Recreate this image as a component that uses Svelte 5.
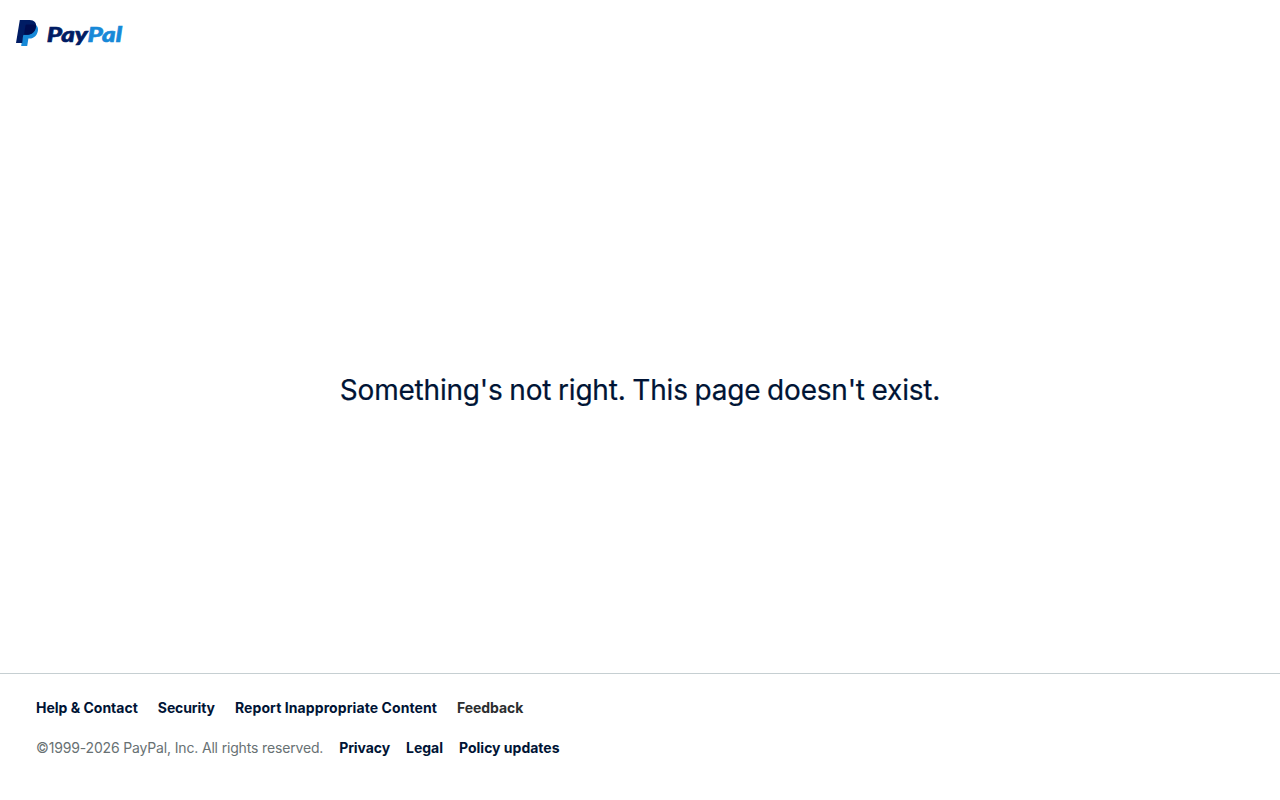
<script>
  const links = [
    { label: "Help & Contact", href: "#help" },
    { label: "Security", href: "#security", tight: true },
    { label: "Report Inappropriate Content", href: "#report", wide: true },
  ];
  const legal = ["Privacy", "Legal", "Policy updates"];
</script>

<div class="page">
  <header>
    <a class="logo" href="#home" aria-label="PayPal">
      <svg width="110" height="30" viewBox="0 0 110 30">
        <path fill="#1789d8" d="M8 6H17C21 6.500 22.700 9.500 21.800 13.300C20.900 17.500 18 20.600 13.500 20.600H12.400L11.200 28H5.200Z" />
        <path fill="#001c64" d="M3.800 2H13.600C18.300 2 20.800 4.900 20 9C19.100 14.200 15.800 16.800 11.200 16.800H8.300Q7.300 16.800 7.100 17.800L6.200 25H0Z" />
        <path fill="#000d50" d="M9.400 7.800Q9.600 6.400 10.900 6.400H16.200Q18.600 6.400 20 7.600C19.600 13.500 16.100 16.800 11.200 16.800H8.100Z" />
        <text class="word" x="30.800" y="23.700" textLength="75.200" lengthAdjust="spacingAndGlyphs"><tspan class="pay">Pay</tspan><tspan class="pal">Pal</tspan></text>
      </svg>
    </a>
  </header>

  <main>
    <h1>Something's not right. This page doesn't exist.</h1>
  </main>

  <footer>
    <nav class="links">
      {#each links as link}
        <a href={link.href} class:wide={link.wide} class:tight={link.tight}>{link.label}</a>
      {/each}
      <button type="button">Feedback</button>
    </nav>
    <div class="legal">
      <span class="copyright">©1999-2026 PayPal, Inc. All rights reserved.</span>
      {#each legal as label}
        <a href="#legal" class:tight={label === "Privacy"}>{label}</a>
      {/each}
    </div>
  </footer>
</div>

<style>
  :global(body) {
    margin: 0;
    background: #fff;
  }

  .page {
    display: flex;
    flex-direction: column;
    height: 100vh;
    color: #001435;
    font-family: Inter, "Liberation Sans", sans-serif;
  }

  header {
    height: 66px;
    flex: none;
  }

  .logo {
    display: inline-block;
    padding: 18px 16px;
  }

  .logo svg {
    display: block;
    overflow: visible;
  }

  .word {
    font-family: Lato, sans-serif;
    font-size: 21.3px;
    font-weight: 900;
    font-style: italic;
    stroke-width: 0.6px;
  }

  .pay {
    fill: #001c64;
    stroke: #001c64;
  }

  .pal {
    fill: #1789d8;
    stroke: #1789d8;
  }

  main {
    flex: 1;
    display: flex;
    align-items: center;
    justify-content: center;
    padding-top: 41px;
  }

  h1 {
    margin: 0;
    font-size: 28px;
    font-weight: 400;
    line-height: 36px;
    letter-spacing: -0.2px;
    word-spacing: -0.9px;
    -webkit-text-stroke: 0.2px #001435;
  }

  footer {
    flex: none;
    box-sizing: border-box;
    height: 127px;
    padding: 24px 36px 0;
    border-top: 1px solid #c6cfd2;
    font-size: 14px;
    line-height: 20px;
  }

  .links,
  .legal {
    display: flex;
    gap: 20px;
  }

  .legal {
    gap: 16px;
    margin-top: 20px;
  }

  a,
  button {
    color: #001435;
    font-weight: 700;
    text-decoration: none;
  }

  .wide {
    letter-spacing: 0.09px;
  }

  .tight {
    letter-spacing: -0.1px;
  }

  button {
    padding: 0;
    border: 0;
    background: none;
    color: #2c2e2f;
    font-family: inherit;
    font-size: 14px;
    line-height: 20px;
    letter-spacing: -0.08px;
  }

  .copyright {
    color: #687173;
    letter-spacing: -0.16px;
  }
</style>
